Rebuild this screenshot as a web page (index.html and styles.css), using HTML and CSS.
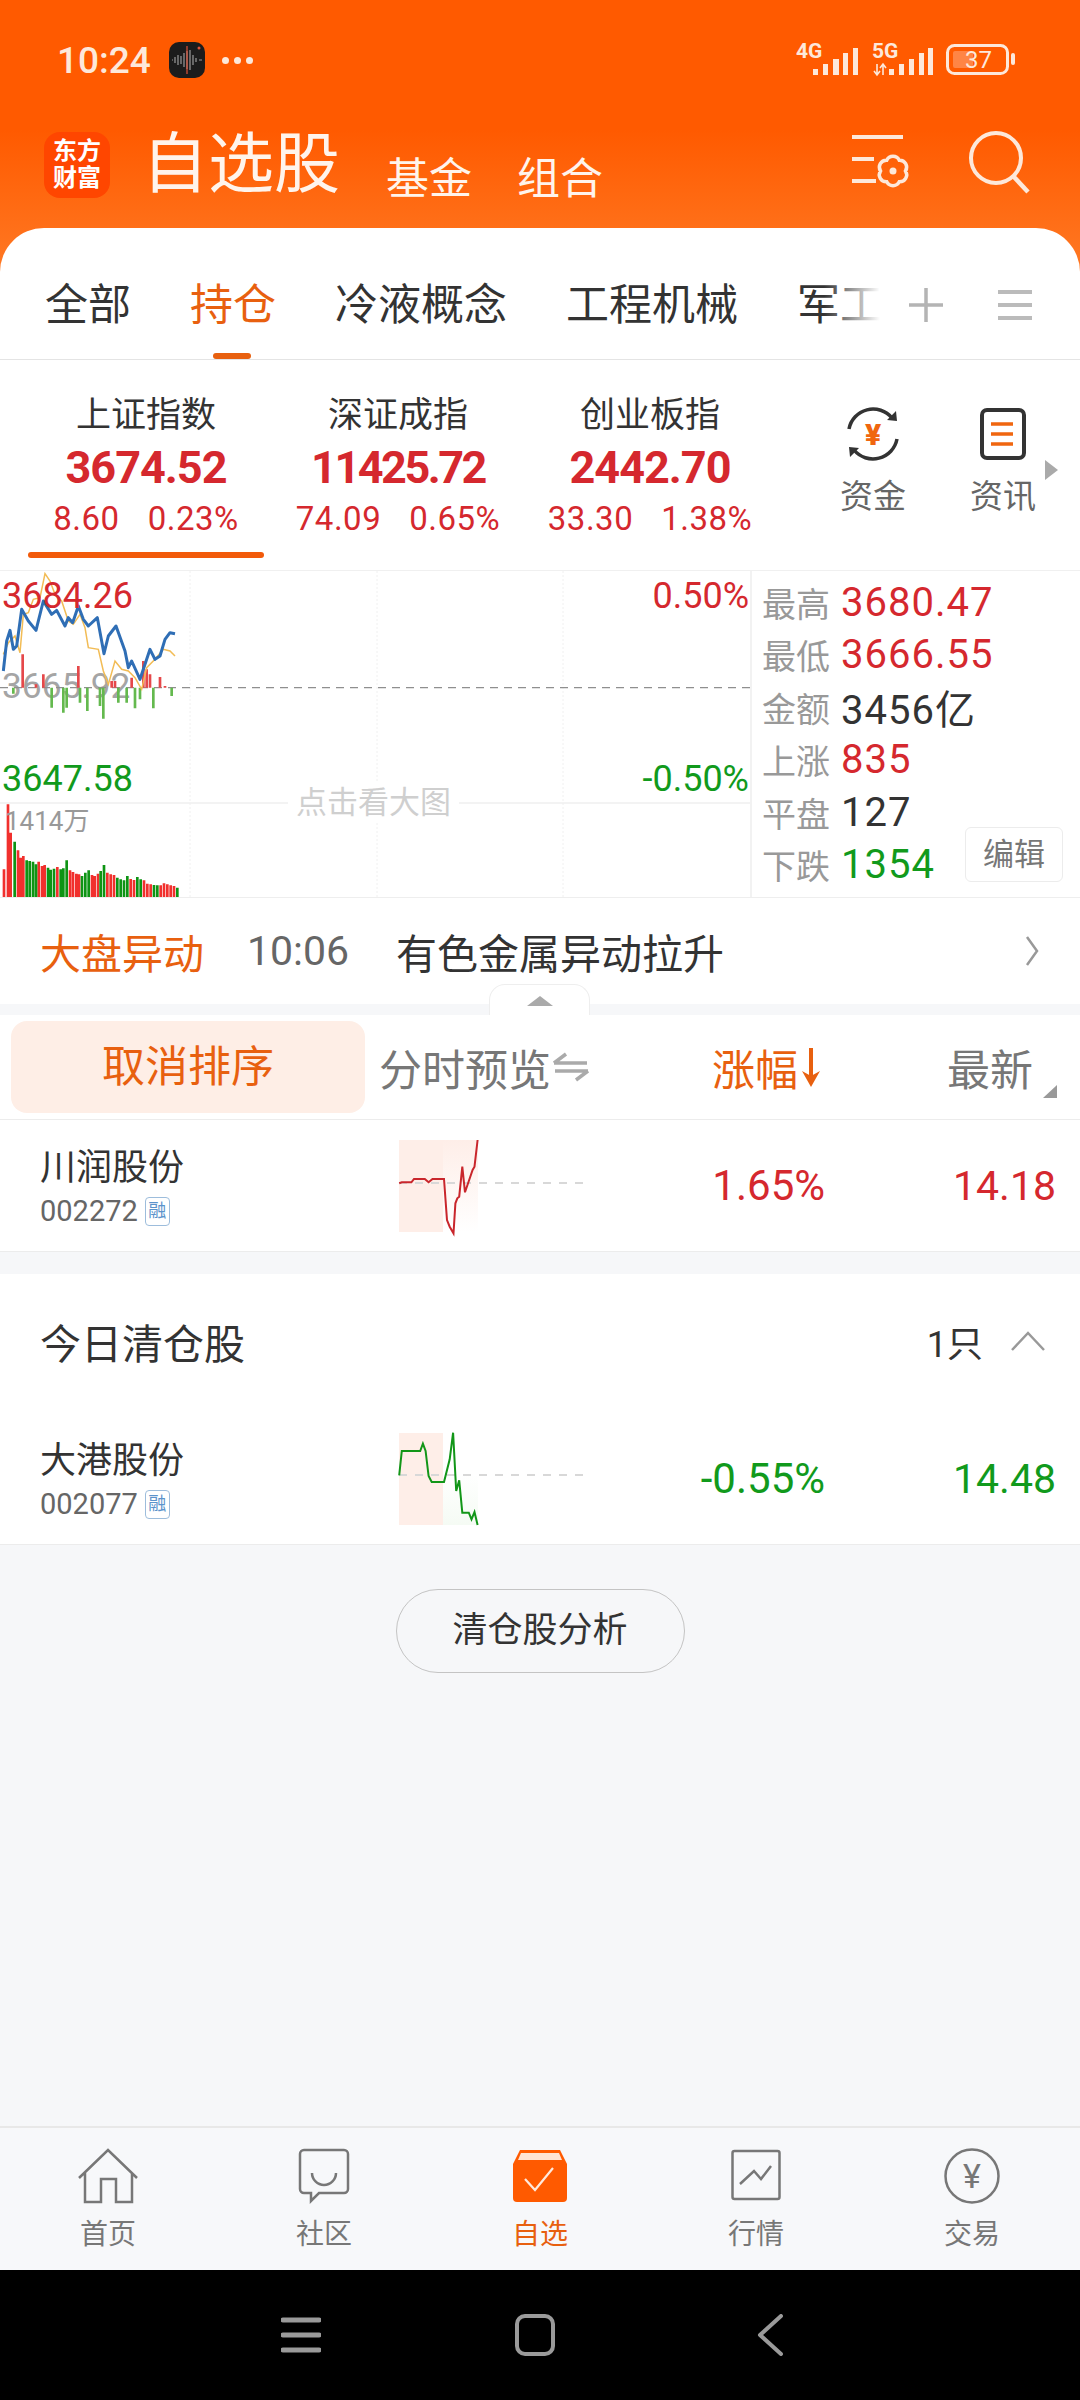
FILE: index.html
```html
<!DOCTYPE html>
<html lang="zh-CN">
<head>
  <title>自选股</title>
  <meta charset="UTF-8">
  <meta name="viewport" content="width=device-width, initial-scale=1.0">
  <link rel="stylesheet" href="styles.css">
</head>
<body>
  <div class="page">
    <div class="top">
      <div class="status-bar">
        <span class="clock">10:24</span>
        <svg class="rec-icon" width="36" height="36" viewBox="0 0 36 36">
          <rect width="36" height="36" rx="10" fill="#1c1c1c"/>
          <path d="M3 18h1M6 15v6M9 13v10M12 14v8M15 11v14M18 9v18M21 8v20M24 13v10M27 16v4M30 18h3" stroke="#9a9a9a" stroke-width="1.2" fill="none"/>
          <path d="M18 4v28" stroke="#e0533a" stroke-width="1.2"/>
          <circle cx="30" cy="6" r="1.5" fill="#e0533a"/>
        </svg>
        <span class="more-dots"><i></i><i></i><i></i></span>
        <div class="status-right">
          <svg width="62" height="44" viewBox="0 -6 62 44">
            <text x="0" y="14" class="net-label">4G</text>
            <path d="M17 31h5v-6h-5zM27 31h5V20h-5zM37 31h6V15h-6zM47 31h5V9h-5zM57 31h5V4h-5z" fill="#fde8da"/>
          </svg>
          <svg class="sig-5g" width="61" height="44" viewBox="0 -6 61 44">
            <text x="0" y="14" class="net-label">5G</text>
            <path d="M5 20v11M2 27l3 4 3-4M11 31V20M8 24l3-4 3 4" stroke="#fde8da" stroke-width="1.6" fill="none"/>
            <path d="M17 31h5v-6h-5zM27 31h5V20h-5zM37 31h5V15h-5zM47 31h5V9h-5zM56 31h5V4h-5z" fill="#fde8da"/>
          </svg>
          <svg class="battery" width="70" height="44" viewBox="0 -6 70 44">
            <rect x="1.5" y="1.5" width="60" height="28" rx="7" fill="none" stroke="#fde8da" stroke-width="3"/>
            <rect x="7" y="7" width="20" height="17" rx="2" fill="#ff8545"/>
            <text x="19" y="24" class="bat-label">37</text>
            <rect x="65" y="9" width="4" height="12" rx="2" fill="#fde8da"/>
          </svg>
        </div>
      </div>
      <div class="title-bar">
        <div class="app-logo"><span>东方</span><span>财富</span></div>
        <div class="page-title">自选股</div>
        <div class="sub-link first">基金</div>
        <div class="sub-link">组合</div>
        <svg class="title-icon" width="58" height="60" viewBox="0 0 58 60">
          <path d="M0 3h51M0 25h22M0 47h24" stroke="#fde8da" stroke-width="4" fill="none"/>
          <path d="M34.750 26.200a7 7 0 0 1 12.500 0a7 7 0 0 1 6.250 10.800a7 7 0 0 1-6.250 10.800a7 7 0 0 1-12.500 0a7 7 0 0 1-6.250-10.800a7 7 0 0 1 6.250-10.800z" stroke="#fde8da" stroke-width="3.500" fill="none"/>
          <circle cx="41" cy="37" r="3.500" fill="#fde8da"/>
        </svg>
        <svg class="title-icon search" width="62" height="66" viewBox="0 0 62 66">
          <circle cx="28" cy="28" r="25" stroke="#fde8da" stroke-width="4" fill="none"/>
          <path d="M46 47l14 15" stroke="#fde8da" stroke-width="4.5" fill="none"/>
        </svg>
      </div>
    </div>

    <div class="sheet">
      <div class="tabs">
        <div class="tab-list">
          <div class="tab">全部</div>
          <div class="tab active">持仓</div>
          <div class="tab">冷液概念</div>
          <div class="tab">工程机械</div>
          <div class="tab">军工</div>
        </div>
        <svg class="tab-plus" width="36" height="36" viewBox="0 0 36 36">
          <path d="M18 1v34M1 18h34" stroke="#b4b4b4" stroke-width="3.5"/>
        </svg>
        <svg class="tab-menu" width="34" height="32" viewBox="0 0 34 32">
          <path d="M0 3h34M0 16h34M0 29h34" stroke="#bbb" stroke-width="4"/>
        </svg>
      </div>

      <div class="index-row">
        <div class="index-col">
          <div class="index-name">上证指数</div>
          <div class="index-price">3674.52</div>
          <div class="index-change"><span>8.60</span><span>0.23%</span></div>
          <div class="index-bar"></div>
        </div>
        <div class="index-col">
          <div class="index-name">深证成指</div>
          <div class="index-price narrow">11425.72</div>
          <div class="index-change"><span>74.09</span><span>0.65%</span></div>
        </div>
        <div class="index-col">
          <div class="index-name">创业板指</div>
          <div class="index-price">2442.70</div>
          <div class="index-change"><span>33.30</span><span>1.38%</span></div>
        </div>
        <div class="tool first">
          <svg width="54" height="54" viewBox="0 0 54 54">
            <path d="M3 22A24.500 24.500 0 0 1 46 11M51 32A24.500 24.500 0 0 1 8 43" stroke="#333" stroke-width="3.500" fill="none"/>
            <path d="M41 13l10 1-1-10zM13 41L3 40l1 10z" fill="#333"/>
            <text x="27" y="38" class="tool-yen">¥</text>
          </svg>
          <div class="tool-label">资金</div>
        </div>
        <div class="tool">
          <svg width="46" height="52" viewBox="0 0 46 52">
            <rect x="2" y="2" width="42" height="48" rx="5" stroke="#333" stroke-width="4" fill="none"/>
            <path d="M11 16h22M11 26h22M11 36h22" stroke="#f0660f" stroke-width="3.500"/>
          </svg>
          <div class="tool-label">资讯</div>
        </div>
        <div class="tool-arrow"></div>
      </div>

      <div class="chart-row">
        <div class="chart">
          <svg class="chart-svg" width="750" height="327" viewBox="0 0 2250 981">
            <path d="M570 0V981M1131 0V981M1689 0V981" stroke="#f0f0f0" stroke-width="3" stroke-dasharray="6 6"/>
            <path d="M0 696H2250" stroke="#efefef" stroke-width="4"/>
            <text x="6" y="382" class="chart-mid">3665.92</text>
            <path d="M0 350H2250" stroke="#8f8f8f" stroke-width="4" stroke-dasharray="24 18"/>
            <path d="M68 350V250M108 350V340M130 350V310M235 350V285M335 350V330M345 350V330M395 350V320M430 350V270M440 350V295M450 350V310M480 350V318M495 350V345" stroke="#e5484a" stroke-width="8"/>
            <path d="M40 350V368M155 350V410M190 350V425M200 350V410M240 350V395M262 350V420M300 350V405M310 350V443M355 350V395M380 350V395M405 350V412M420 350V385M460 350V412M515 350V375" stroke="#64b94e" stroke-width="8"/>
            <polyline fill="none" stroke="#f2bc55" stroke-width="4.500" points="10,250 25,215 45,195 60,245 70,130 85,125 100,85 120,80 135,8 150,30 165,70 185,90 205,150 220,160 240,130 255,170 265,230 295,235 310,300 325,340 345,270 365,295 385,300 405,320 425,355 440,290 465,265 490,235 510,240 525,255"/>
            <polyline fill="none" stroke="#2f6eb5" stroke-width="9" stroke-linejoin="round" points="10,300 20,210 30,178 40,235 50,225 65,115 85,150 108,178 130,90 155,130 170,118 195,165 205,140 218,155 235,105 250,145 265,165 292,140 312,248 325,195 348,165 375,240 385,290 395,270 420,325 450,235 465,265 480,255 495,205 510,185 525,188"/>
            <path d="M12 981V895M24 981V700M32 981V785M54 981V838M62 981V860M70 981V855M116 981V872M126 981V885M134 981V882M172 981V888M210 981V898M219 981V903M229 981V908M237 981V910M276 981V912M284 981V915M294 981V908M322 981V905M332 981V910M342 981V912M392 981V924M402 981V927M432 981V928M442 981V938M452 981V940M482 981V943M492 981V937M502 981V940M512 981V943M522 981V945" stroke="#f1302d" stroke-width="8"/>
            <path d="M44 981V812M80 981V868M89 981V870M99 981V872M108 981V880M144 981V890M152 981V896M162 981V893M182 981V895M190 981V892M200 981V868M246 981V915M256 981V905M266 981V898M302 981V900M312 981V882M352 981V920M362 981V925M372 981V928M382 981V915M412 981V918M422 981V925M462 981V942M472 981V943M532 981V950" stroke="#0e9414" stroke-width="8"/>
          </svg>
          <div class="chart-label high">3684.26</div>
          <div class="chart-label low">3647.58</div>
          <div class="chart-label pct-up">0.50%</div>
          <div class="chart-label pct-down">-0.50%</div>
          <div class="chart-vol">1414万</div>
          <div class="chart-tip">点击看大图</div>
        </div>
        <div class="stats">
          <div class="stat"><span class="stat-key">最高</span><span class="stat-val red">3680.47</span></div>
          <div class="stat"><span class="stat-key">最低</span><span class="stat-val red">3666.55</span></div>
          <div class="stat"><span class="stat-key">金额</span><span class="stat-val">3456亿</span></div>
          <div class="stat"><span class="stat-key">上涨</span><span class="stat-val red">835</span></div>
          <div class="stat"><span class="stat-key">平盘</span><span class="stat-val">127</span></div>
          <div class="stat"><span class="stat-key">下跌</span><span class="stat-val green">1354</span></div>
          <div class="edit-btn">编辑</div>
        </div>
      </div>

      <div class="alert-row">
        <span class="alert-tag">大盘异动</span>
        <span class="alert-time">10:06</span>
        <span class="alert-text">有色金属异动拉升</span>
        <svg class="alert-chevron" width="14" height="30" viewBox="0 0 14 30">
          <path d="M2 1l10 14L2 29" stroke="#999" stroke-width="2.500" fill="none"/>
        </svg>
      </div>
    </div>

    <div class="band">
      <div class="collapse-handle"><i></i></div>
    </div>

    <div class="list-head">
      <div class="sort-btn">取消排序</div>
      <div class="head-preview">分时预览
        <svg width="36" height="30" viewBox="0 0 36 30">
          <path d="M1 11H34M1 11L13 2M2 19H35M35 19L23 28" stroke="#aaa" stroke-width="3.500" fill="none"/>
        </svg>
      </div>
      <div class="head-change">涨幅
        <svg width="20" height="40" viewBox="0 0 20 40">
          <path d="M10 1V34" stroke="#e8600f" stroke-width="4"/>
          <path d="M1 24l9 16 9-16-9 5z" fill="#e8600f"/>
        </svg>
      </div>
      <div class="head-latest">最新<i class="corner"></i></div>
    </div>

    <div class="stock-row">
      <div class="stock-name-col">
        <div class="stock-name">川润股份</div>
        <div class="stock-code">002272<span class="tag">融</span></div>
      </div>
      <svg class="spark" width="190" height="100" viewBox="0 0 190 100">
        <defs>
          <linearGradient id="fade1" x1="0" y1="0" x2="0" y2="1">
            <stop offset="0" stop-color="#feeee8"/>
            <stop offset="1" stop-color="#ffffff"/>
          </linearGradient>
        </defs>
        <rect x="1" y="2" width="44" height="92" fill="#feeee8"/>
        <rect x="45" y="2" width="35" height="92" fill="url(#fade1)"/>
        <path d="M1 45H185" stroke="#d8d8d8" stroke-width="2" stroke-dasharray="8 8"/>
        <polyline fill="none" stroke="#c9262c" stroke-width="2" points="1.200,45.300 3.800,44.300 13.400,44.300 16,41 26.800,41 30.600,44.300 34.500,41 46,41 49,82 51.700,88.700 55.500,95.300 57.400,65.300 59.300,60.300 61.200,58.700 64.300,28.700 67,54.300 74.600,32 76.500,28.700 79.600,2"/>
      </svg>
      <div class="stock-change red">1.65%</div>
      <div class="stock-price red">14.18</div>
    </div>

    <div class="section-head">
      <span class="section-title">今日清仓股</span>
      <span class="section-count">1只</span>
      <svg width="34" height="20" viewBox="0 0 34 20">
        <path d="M1 19L17 2l16 17" stroke="#999" stroke-width="2.500" fill="none"/>
      </svg>
    </div>

    <div class="stock-row">
      <div class="stock-name-col">
        <div class="stock-name">大港股份</div>
        <div class="stock-code">002077<span class="tag">融</span></div>
      </div>
      <svg class="spark" width="190" height="100" viewBox="0 0 190 100">
        <defs>
          <linearGradient id="fade2" x1="0" y1="0" x2="0" y2="1">
            <stop offset="0.45" stop-color="#ffffff"/>
            <stop offset="1" stop-color="#f5fbf4"/>
          </linearGradient>
        </defs>
        <rect x="1" y="2" width="44" height="92" fill="#feeee8"/>
        <rect x="45" y="2" width="35" height="92" fill="url(#fade2)"/>
        <path d="M1 44H185" stroke="#d8d8d8" stroke-width="2" stroke-dasharray="8 8"/>
        <polyline fill="none" stroke="#129618" stroke-width="2" points="1.200,44.300 3.800,20 22.200,20 24.900,12.700 27.600,20 30.600,45 33.700,51 46,51 51.700,28.300 55.100,1.700 58.200,60 61.200,49.300 64.300,81.700 70.800,81.700 73.500,88.300 76.500,81 79.600,94"/>
      </svg>
      <div class="stock-change green">-0.55%</div>
      <div class="stock-price green">14.48</div>
    </div>

    <div class="content-rest">
      <div class="clear-btn">清仓股分析</div>
    </div>

    <div class="tabbar">
      <div class="nav-item">
        <svg width="60" height="56" viewBox="0 0 60 56">
          <path d="M1 30L30 2l29 28M7 25V54H23V31H38V54H54V25" stroke="#777" stroke-width="2.500" fill="none"/>
        </svg>
        <span>首页</span>
      </div>
      <div class="nav-item">
        <svg width="52" height="56" viewBox="0 0 52 56">
          <path d="M6 2H46a4 4 0 0 1 4 4V41a4 4 0 0 1-4 4H21l-8 8v-8H6a4 4 0 0 1-4-4V6a4 4 0 0 1 4-4z" stroke="#777" stroke-width="2.500" fill="none"/>
          <path d="M14 25a12 12 0 0 0 24 0" stroke="#777" stroke-width="2.500" fill="none"/>
        </svg>
        <span>社区</span>
      </div>
      <div class="nav-item active">
        <svg width="54" height="56" viewBox="0 0 54 56">
          <path d="M7 2H47L54 16V50a4 4 0 0 1-4 4H4a4 4 0 0 1-4-4V16z" fill="#ff5a00"/>
          <path d="M8 5H46L49 12H5z" fill="#ffe3d2"/>
          <path d="M12 31l10 11 18-22" stroke="#ffe9dc" stroke-width="2.200" fill="none"/>
        </svg>
        <span>自选</span>
      </div>
      <div class="nav-item">
        <svg width="50" height="56" viewBox="0 0 50 56">
          <rect x="1.500" y="3" width="47" height="48" rx="2" stroke="#777" stroke-width="2.500" fill="none"/>
          <path d="M9 36l14-13 7 8 10-13" stroke="#777" stroke-width="2.500" fill="none"/>
        </svg>
        <span>行情</span>
      </div>
      <div class="nav-item">
        <svg width="56" height="56" viewBox="0 0 56 56">
          <circle cx="28" cy="28" r="26.500" stroke="#777" stroke-width="2.500" fill="none"/>
          <text x="28" y="40" class="nav-yen">¥</text>
        </svg>
        <span>交易</span>
      </div>
    </div>

    <div class="sys-nav">
      <svg width="40" height="36" viewBox="0 0 40 36">
        <path d="M2 3h36M2 18h36M2 33h36" stroke="#9a9a9a" stroke-width="5" stroke-linecap="round"/>
      </svg>
      <svg width="40" height="42" viewBox="0 0 40 42">
        <rect x="2" y="2" width="36" height="38" rx="8" stroke="#9a9a9a" stroke-width="4" fill="none"/>
      </svg>
      <svg width="26" height="42" viewBox="0 0 26 42">
        <path d="M24 2L3 21l21 19" stroke="#9a9a9a" stroke-width="4" stroke-linecap="round" stroke-linejoin="round" fill="none"/>
      </svg>
    </div>
  </div>
</body>
</html>
```

FILE: styles.css
```css
:root {
  --orange: #ff5a00;
  --accent: #e8600f;
  --red: #d5282e;
  --green: #119a1c;
  --dark: #333333;
  --gray: #777777;
  --light-gray: #999999;
  --line: #eeeeee;
  --band: #f6f7f9;
  --on-orange: #fde8da;
}

* {
  margin: 0;
  padding: 0;
  box-sizing: border-box;
}

body {
  margin: 0;
  font-family: Roboto, "Noto Sans CJK SC", sans-serif;
  color: var(--dark);
  background: var(--band);
}

i {
  display: block;
}

.page {
  width: 1080px;
  height: 2400px;
  display: flex;
  flex-direction: column;
  overflow: hidden;
}

.red {
  color: var(--red);
}

.green {
  color: var(--green);
}

/* Header */
.top {
  height: 278px;
  padding: 42px 0 0 44px;
  background: linear-gradient(#ff5a00 0, #ff5a00 130px, #ff7a25 278px);
}

.status-bar {
  display: flex;
  align-items: center;
  height: 36px;
  padding-left: 13px;
  color: var(--on-orange);
}

.clock {
  font-size: 37px;
  font-weight: 500;
  width: 112px;
}

.more-dots {
  display: flex;
  gap: 5px;
  margin-left: 17px;
}

.more-dots i {
  width: 7px;
  height: 7px;
  border-radius: 50%;
  background: var(--on-orange);
}

.status-right {
  display: flex;
  align-items: center;
  position: relative;
  margin-left: auto;
  padding-right: 64px;
}

.status-right svg {
  flex-shrink: 0;
}

.sig-5g {
  margin-left: 14px;
}

.battery {
  margin-left: 13px;
}

.net-label {
  font-size: 21px;
  font-weight: 700;
  fill: var(--on-orange);
}

.bat-label {
  font-size: 24px;
  fill: var(--on-orange);
}

.title-bar {
  display: flex;
  align-items: center;
  height: 66px;
  margin-top: 54px;
  color: #fff4ec;
}

.app-logo {
  width: 66px;
  height: 66px;
  border-radius: 16px;
  background: #ff4600;
  color: #fff;
  font-size: 24px;
  font-weight: 700;
  line-height: 27px;
  display: flex;
  flex-direction: column;
  align-items: center;
  justify-content: center;
}

.page-title {
  font-size: 66px;
  margin-left: 32px;
  line-height: 66px;
}

.sub-link {
  font-size: 43px;
  line-height: 50px;
  margin: 28px 0 0 45px;
}

.sub-link.first {
  margin-left: 46px;
}

.title-icon {
  margin-left: auto;
  margin-top: -2px;
}

.title-icon.search {
  margin: -4px 50px 0 58px;
}

/* White sheet */
.sheet {
  margin-top: -50px;
  background: #fff;
  border-radius: 44px 44px 0 0;
  position: relative;
}

.tabs {
  display: flex;
  align-items: center;
  height: 132px;
  padding-top: 22px;
  border-bottom: 1px solid #e4e4e4;
}

.tab-list {
  display: flex;
  gap: 59px;
  width: 880px;
  height: 100%;
  padding-left: 45px;
  overflow: hidden;
  position: relative;
  align-items: center;
  font-size: 43px;
  white-space: nowrap;
}

.tab-list::after {
  content: '';
  position: absolute;
  top: 0;
  right: 0;
  bottom: 0;
  width: 56px;
  background: linear-gradient(90deg, rgba(255, 255, 255, 0), #fff);
}

.tab {
  flex-shrink: 0;
  position: relative;
  line-height: 60px;
}

.tab.active {
  color: var(--accent);
}

.tab.active::after {
  content: '';
  position: absolute;
  left: 23px;
  bottom: -24px;
  width: 38px;
  height: 6px;
  border-radius: 3px;
  background: var(--accent);
}

.tab-plus {
  margin-left: 28px;
}

.tab-menu {
  margin-left: 54px;
}

.index-row {
  display: flex;
  height: 211px;
  padding-left: 20px;
  border-bottom: 1px solid #f0f0f0;
  position: relative;
}

.index-col {
  width: 252px;
  padding-top: 34px;
  display: flex;
  flex-direction: column;
  align-items: center;
}

.index-name {
  font-size: 35px;
  line-height: 44px;
}

.index-price {
  font-size: 45px;
  font-weight: 700;
  line-height: 50px;
  margin-top: 5px;
  color: var(--red);
  letter-spacing: -1px;
}

.index-price.narrow {
  letter-spacing: -2.500px;
}

.index-change {
  display: flex;
  gap: 28px;
  font-size: 33px;
  line-height: 40px;
  margin-top: 6px;
  color: var(--red);
  letter-spacing: 0.500px;
}

.index-bar {
  width: 236px;
  height: 6px;
  margin-top: 13px;
  border-radius: 3px;
  background: #f25a0a;
}

.tool {
  width: 130px;
  padding-top: 47px;
  display: flex;
  flex-direction: column;
  align-items: center;
}

.tool.first {
  margin-left: 32px;
}

.tool svg {
  height: 54px;
}

.tool-label {
  font-size: 33px;
  line-height: 40px;
  margin-top: 16px;
  color: #666;
}

.tool-yen {
  font-size: 30px;
  font-weight: 900;
  fill: #f0660f;
  text-anchor: middle;
}

.tool-arrow {
  position: absolute;
  left: 1045px;
  top: 100px;
  width: 0;
  height: 0;
  border-left: 13px solid #aaa;
  border-top: 10px solid transparent;
  border-bottom: 10px solid transparent;
}

/* Index chart */
.chart-row {
  display: flex;
  height: 327px;
  border-bottom: 1px solid #eeeeee;
}

.chart {
  width: 750px;
  position: relative;
  overflow: hidden;
}

.chart-svg {
  display: block;
}

.chart-mid {
  font-size: 106px;
  fill: #a5a5a5;
}

.chart-label {
  position: absolute;
  font-size: 36px;
  line-height: 40px;
}

.chart-label.high {
  left: 2px;
  top: 5px;
  color: var(--red);
}

.chart-label.low {
  left: 2px;
  top: 188px;
  color: var(--green);
}

.chart-label.pct-up {
  right: 1px;
  top: 5px;
  color: var(--red);
}

.chart-label.pct-down {
  right: 1px;
  top: 188px;
  color: var(--green);
}

.chart-vol {
  position: absolute;
  left: 5px;
  top: 234px;
  font-size: 26px;
  line-height: 32px;
  color: var(--light-gray);
}

.chart-tip {
  position: absolute;
  left: 288px;
  top: 212px;
  padding: 0 8px;
  background: #fff;
  font-size: 31px;
  line-height: 40px;
  color: #cfcfcf;
}

.stats {
  flex: 1;
  padding: 5px 0 0 10px;
  border-left: 2px solid #f2f2f2;
  position: relative;
}

.stat {
  display: flex;
  align-items: center;
  height: 52.500px;
}

.stat-key {
  width: 79px;
  font-size: 34px;
  color: var(--light-gray);
}

.stat-val {
  font-size: 40px;
  letter-spacing: 1px;
}

.edit-btn {
  position: absolute;
  right: 17px;
  bottom: 15px;
  width: 98px;
  height: 55px;
  border: 1px solid #ececec;
  border-radius: 6px;
  font-size: 31px;
  line-height: 53px;
  text-align: center;
  color: var(--gray);
}

/* Market alert */
.alert-row {
  display: flex;
  align-items: center;
  height: 106px;
  padding-left: 40px;
  font-size: 41px;
}

.alert-tag {
  width: 207px;
  color: var(--accent);
}

.alert-time {
  width: 149px;
  color: #666;
}

.alert-chevron {
  margin-left: auto;
  margin-right: 41px;
}

.band {
  height: 11px;
  position: relative;
  background: var(--band);
}

.collapse-handle {
  position: absolute;
  left: 489px;
  bottom: 0;
  width: 101px;
  height: 31px;
  background: #fff;
  border: 1px solid #eeeeee;
  border-bottom: none;
  border-radius: 16px 16px 0 0;
}

.collapse-handle i {
  width: 0;
  height: 0;
  margin: 11px auto 0;
  border-left: 13px solid transparent;
  border-right: 13px solid transparent;
  border-bottom: 10px solid #aaa;
}

/* Stock list */
.list-head {
  display: flex;
  align-items: center;
  height: 105px;
  padding-left: 11px;
  background: #fff;
  border-bottom: 1px solid #ececec;
  font-size: 43px;
  color: var(--gray);
}

.sort-btn {
  width: 354px;
  height: 92px;
  line-height: 92px;
  text-align: center;
  border-radius: 16px;
  background: #feeee6;
  color: var(--accent);
}

.head-preview {
  display: flex;
  align-items: center;
  gap: 2px;
  width: 302px;
  margin-left: 14px;
}

.head-change {
  display: flex;
  align-items: center;
  justify-content: flex-end;
  gap: 3px;
  width: 140px;
  color: var(--accent);
}

.head-latest {
  flex: 1;
  display: flex;
  justify-content: flex-end;
  padding-right: 47px;
  position: relative;
}

.corner {
  position: absolute;
  right: 23px;
  bottom: 0;
  width: 0;
  height: 0;
  border-left: 14px solid transparent;
  border-bottom: 13px solid #999;
}

.stock-row {
  display: grid;
  grid-template-columns: 398px 190px 237px 1fr;
  height: 132px;
  background: #fff;
  border-bottom: 1px solid #ececec;
}

.stock-name-col {
  padding: 23px 0 0 40px;
}

.stock-name {
  font-size: 36px;
  line-height: 50px;
}

.stock-code {
  display: flex;
  align-items: center;
  gap: 7px;
  margin-top: 3px;
  font-size: 29px;
  line-height: 30px;
  color: #666;
}

.tag {
  width: 25px;
  height: 29px;
  border: 1.500px solid #9dbddc;
  border-radius: 4px;
  font-size: 18px;
  line-height: 26px;
  text-align: center;
  color: #5c93cb;
}

.spark {
  margin-top: 18px;
}

.stock-change,
.stock-price {
  font-size: 42px;
  line-height: 132px;
  text-align: right;
}

.stock-price {
  font-size: 41px;
  padding-right: 24px;
}

.section-head {
  display: flex;
  align-items: center;
  height: 139px;
  margin-top: 22px;
  padding: 0 35px 6px 40px;
  background: #fff;
}

.section-title {
  font-size: 41px;
}

.section-count {
  margin-left: auto;
  margin-right: 28px;
  font-size: 36px;
}

.content-rest {
  flex: 1;
  padding-top: 44px;
}

.clear-btn {
  width: 289px;
  height: 84px;
  margin: 0 auto;
  border: 1.500px solid #c4c4c4;
  border-radius: 42px;
  font-size: 35px;
  line-height: 81px;
  text-align: center;
}

/* Bottom navigation */
.tabbar {
  display: grid;
  grid-template-columns: repeat(5, 1fr);
  height: 144px;
  padding-top: 20px;
  background: #f7f8fa;
  border-top: 2px solid #e8e8e8;
}

.nav-item {
  display: flex;
  flex-direction: column;
  align-items: center;
  font-size: 28px;
  line-height: 40px;
  color: var(--gray);
}

.nav-item svg {
  height: 56px;
}

.nav-item span {
  margin-top: 11px;
}

.nav-item.active {
  color: var(--accent);
}

.nav-yen {
  font-size: 34px;
  fill: #777;
  text-anchor: middle;
}

.sys-nav {
  display: flex;
  align-items: center;
  height: 130px;
  padding: 0 0 0 281px;
  background: #000;
}

.sys-nav svg:nth-child(2) {
  margin-left: 194px;
}

.sys-nav svg:nth-child(3) {
  margin-left: 202px;
}
```
